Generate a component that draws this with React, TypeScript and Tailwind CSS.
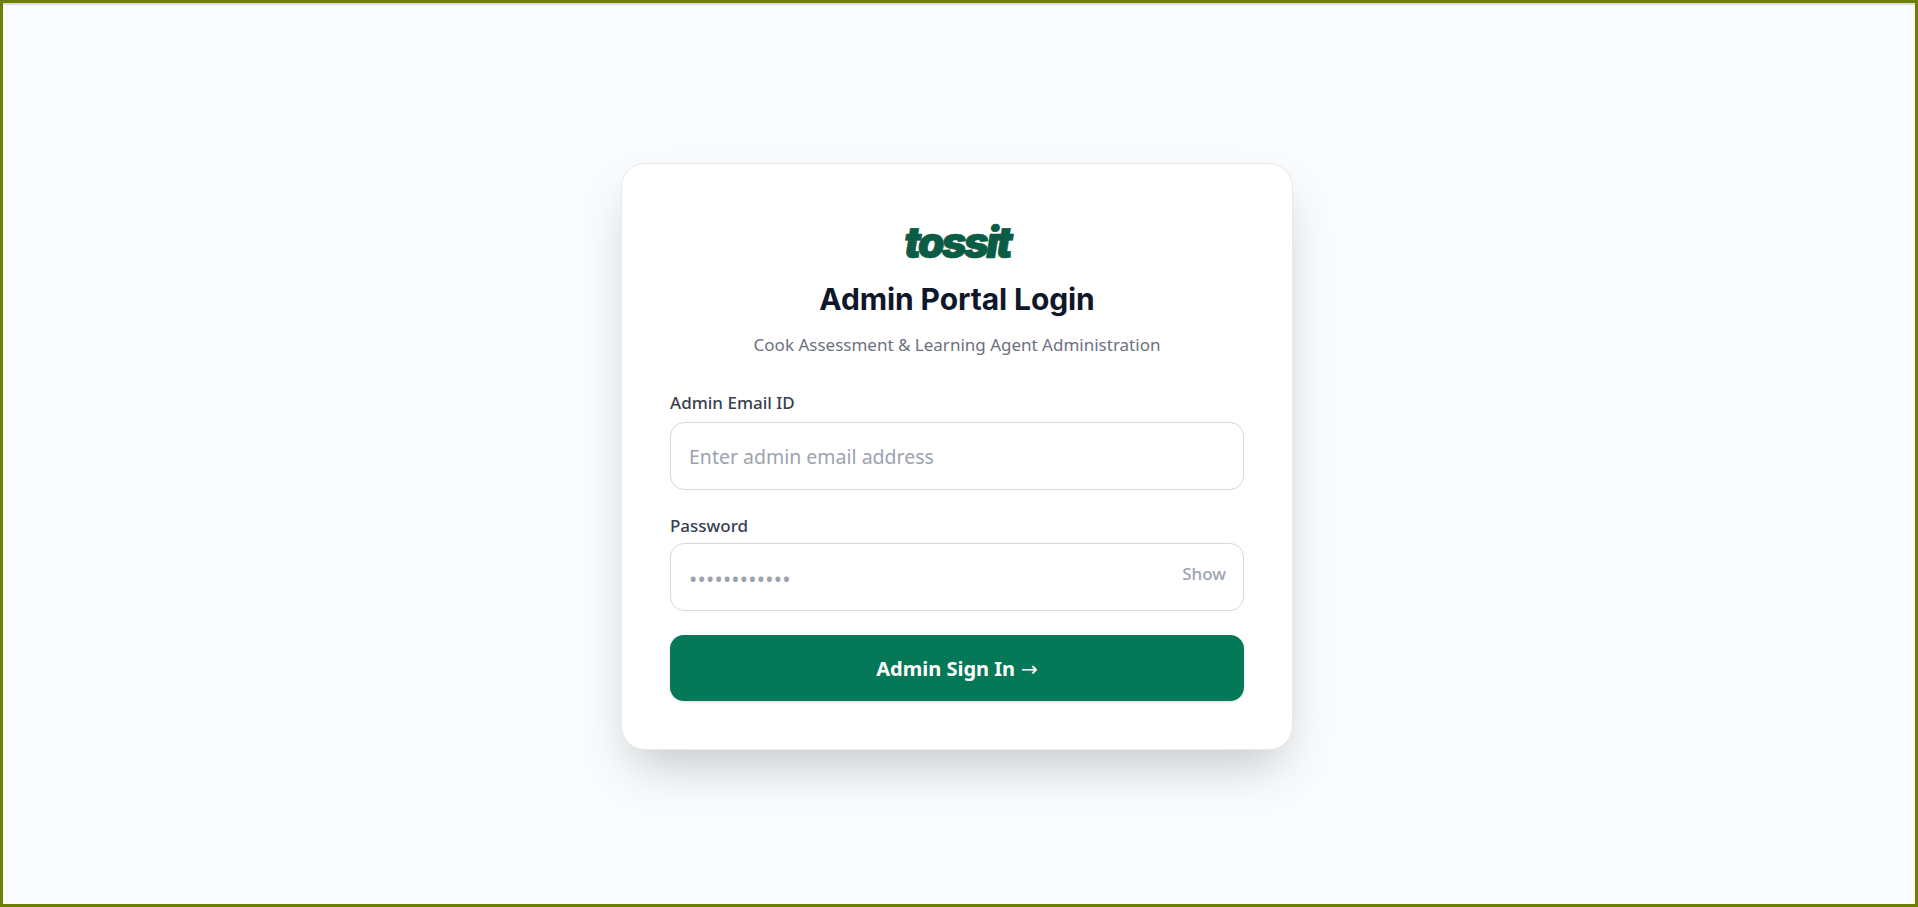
import React from 'react';

const bodyFont = 'font-["Noto_Sans",sans-serif]';

const App: React.FC = () => {
  return (
    <div className={`h-[907px] w-full border-[3px] border-[#6f8000] bg-[#f9fbfd] ${bodyFont}`}>
      <div className="h-[2px] bg-[#d9dcdc]" />
      <div className="flex h-[897px] items-start justify-center pt-[158px] pr-[4px]">
        {/* Login card */}
        <div className="h-[587px] w-[672px] rounded-[24px] border border-[#e4ebee] bg-white px-[48px] pt-[61px] shadow-[0_25px_50px_-12px_rgba(0,0,0,0.22)]">
          {/* Header */}
          <div className="text-center">
            <div className="h-[34px] font-['Inter',sans-serif] text-[43px] leading-[34px] font-black tracking-[-3px] text-[#0b5c45] italic [-webkit-text-stroke:0.6px_#0b5c45]">
              tossit
            </div>
            <h1 className="mt-[21px] font-['Inter',sans-serif] text-[30px] leading-[38px] font-bold tracking-[-0.1px] text-[#0f172a]">
              Admin Portal Login
            </h1>
            <p className="mt-[15px] text-[17px] leading-[24px] text-[#6b7280]">
              Cook Assessment &amp; Learning Agent Administration
            </p>
          </div>

          {/* Email */}
          <label className="mt-[34px] block text-[17px] leading-[23px] font-medium text-[#374151]">Admin Email ID</label>
          <div className="mt-[8px] flex h-[68px] items-center rounded-[14px] border border-[#d1d8e0] px-[18px]">
            <span className="mt-[2px] text-[19.5px] text-[#9ca3af]">Enter admin email address</span>
          </div>

          {/* Password */}
          <label className="mt-[24px] block text-[17px] leading-[23px] font-medium text-[#374151]">Password</label>
          <div className="mt-[6px] flex h-[68px] items-center justify-between rounded-[14px] border border-[#d1d8e0] pr-[17px] pl-[18px]">
            <span className="mt-[3px] text-[22px] tracking-[0.2px] text-[#9ca3af]">••••••••••••</span>
            <span className="mb-[7px] text-[17px] font-medium text-[#9ca3af]">Show</span>
          </div>

          {/* Submit */}
          <button className="mt-[24px] flex h-[66px] w-full items-center justify-center rounded-[14px] bg-[#047857] pt-[2px] text-[20px] font-bold text-white shadow-sm">
            Admin Sign In <span className="ml-[6px] font-['DejaVu_Sans',sans-serif] text-[20px] font-normal">→</span>
          </button>
        </div>
      </div>
    </div>
  );
};

export default App;
